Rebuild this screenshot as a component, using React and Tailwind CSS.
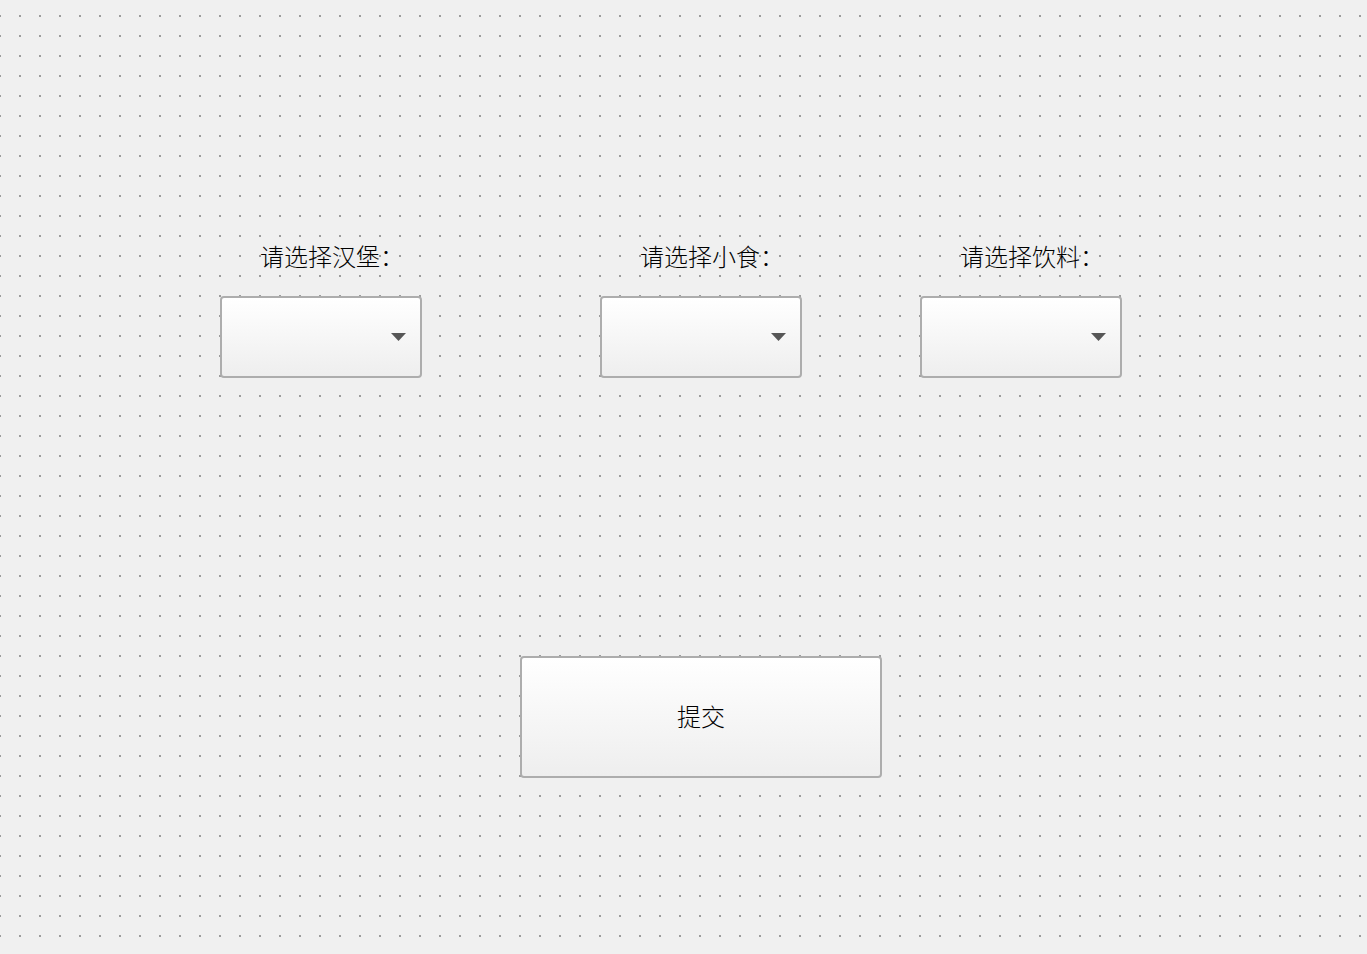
import React from "react";

function Arrow() {
  return (
    <svg width="15" height="8" viewBox="0 0 15 8" className="block">
      <polygon points="0,0 15,0 7.5,8" fill="#575757" />
    </svg>
  );
}

function Combo() {
  return (
    <div className="w-[202px] h-[82px] border-2 border-[#adadad] rounded-[4px] bg-linear-to-b from-[#ffffff] to-[#eeeeee] flex items-center justify-end pr-[14px]">
      <Arrow />
    </div>
  );
}

function Field({ label }) {
  return (
    <div className="flex flex-col">
      <div className="ml-[40px] h-[24px] text-[24px] leading-[24px] font-light text-black whitespace-nowrap">{label}</div>
      <div className="mt-[28px]">
        <Combo />
      </div>
    </div>
  );
}

export default function App() {
  return (
    <div
      className="w-[1367px] h-[954px] overflow-hidden bg-[#f0f0f0] bg-[radial-gradient(circle,#9c9c9c_1px,transparent_1px)] bg-[length:20px_20px] bg-[position:10px_6px]"
      style={{ fontFamily: '"Noto Sans CJK SC", "Noto Sans", sans-serif' }}
    >
      <div className="pt-[244px] pl-[220px]">
        <div className="flex items-start">
          <Field label="请选择汉堡：" />
          <div className="ml-[178px]">
            <Field label="请选择小食：" />
          </div>
          <div className="ml-[118px]">
            <Field label="请选择饮料：" />
          </div>
        </div>
        <div className="mt-[278px] ml-[300px] w-[362px] h-[122px] border-2 border-[#adadad] rounded-[4px] bg-linear-to-b from-[#ffffff] to-[#eeeeee] flex items-center justify-center">
          <span className="text-[24px] leading-[24px] font-light text-black -mt-[2px]">提交</span>
        </div>
      </div>
    </div>
  );
}
